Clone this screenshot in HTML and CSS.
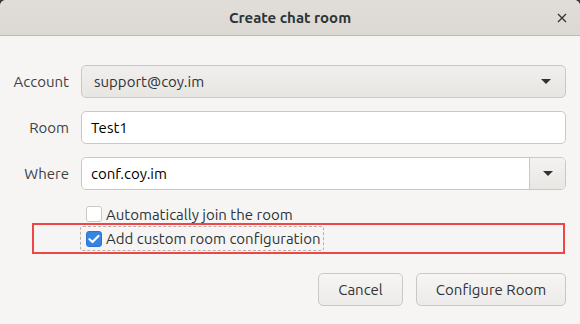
FILE: index.html
```html
<!DOCTYPE html>
<html>
<head>
	<meta charset="utf-8">
	<title>Create chat room</title>
	<link rel="stylesheet" href="styles.css">
</head>
<body>
	<div class="dialog">
		<!-- title bar -->
		<div class="titlebar">
			<span class="title">Create chat room</span>
			<svg class="close" width="10" height="10" viewBox="0 0 10 10"><path d="M1 1 L9 9 M9 1 L1 9" stroke="#2e3436" stroke-width="1.3" fill="none"/></svg>
		</div>
		<div class="content">
			<!-- form rows -->
			<div class="form">
				<label class="lbl">Account</label>
				<div class="combo">
					<span>support@coy.im</span>
					<span class="arrow"></span>
				</div>
				<label class="lbl">Room</label>
				<div class="entry">Test1</div>
				<label class="lbl">Where</label>
				<div class="entry entry-combo">
					<span class="entry-text">conf.coy.im</span>
					<span class="drop"><span class="arrow"></span></span>
				</div>
			</div>
			<!-- options -->
			<div class="checks">
				<div class="check-row">
					<span class="box"></span>
					<span>Automatically join the room</span>
				</div>
				<div class="highlight">
					<div class="check-row focused">
						<span class="box checked">
							<svg width="12" height="10" viewBox="0 0 12 10"><path d="M1.5 5.2 L4.5 8 L10.5 2" fill="none" stroke="#fff" stroke-width="2.2" stroke-linecap="round" stroke-linejoin="round"/></svg>
						</span>
						<span>Add custom room configuration</span>
					</div>
				</div>
			</div>
			<!-- buttons -->
			<div class="actions">
				<div class="btn btn-cancel">Cancel</div>
				<div class="btn btn-ok">Configure Room</div>
			</div>
		</div>
	</div>
</body>
</html>
```

FILE: styles.css
```css
/* page reset */
body {
	margin: 0;
	background-color: #3b3b3b;
	font-family: "Ubuntu", "Noto Sans", sans-serif;
	font-size: 15px;
	color: #2e3436;
}
/* the window itself */
.dialog {
	width: 580px;
	height: 324px;
	background-color: #f6f5f4;
	border-radius: 6px 6px 0 0;
	overflow: hidden;
}
/* header with title and close button */
.titlebar {
	height: 36px;
	box-sizing: border-box;
	border-bottom: 1px solid #c0bbb5;
	background: linear-gradient(#e1deda, #dcd8d4);
	display: flex;
	align-items: center;
	justify-content: center;
	position: relative;
}
.title {
	font-weight: bold;
	font-size: 15px;
	color: #2e3436;
}
.close {
	position: absolute;
	right: 13px;
	top: 13px;
}
.content {
	padding: 29px 14px 0 0;
}
/* label + field grid */
.form {
	display: grid;
	grid-template-columns: 69px 1fr;
	column-gap: 12px;
	row-gap: 13px;
	align-items: center;
}
.lbl {
	text-align: right;
	color: #3d4244;
}
.combo {
	height: 33px;
	box-sizing: border-box;
	border: 1px solid #cdc7c2;
	border-radius: 5px;
	background: linear-gradient(#f0efed, #e8e6e3);
	display: flex;
	align-items: center;
	justify-content: space-between;
	padding: 0 14px 0 12px;
	color: #2e3436;
}
.arrow {
	width: 0;
	height: 0;
	border-left: 5px solid transparent;
	border-right: 5px solid transparent;
	border-top: 5px solid #2e3436;
}
.entry {
	height: 33px;
	box-sizing: border-box;
	border: 1px solid #cdc7c2;
	border-radius: 5px;
	background-color: #fff;
	display: flex;
	align-items: center;
	padding-left: 9px;
	color: #000;
}
.entry-combo {
	padding-left: 0;
	overflow: hidden;
}
.entry-text {
	flex: 1;
	padding-left: 9px;
}
.drop {
	width: 36px;
	height: 100%;
	box-sizing: border-box;
	border-left: 1px solid #cdc7c2;
	background: linear-gradient(#f3f2f0, #e9e7e4);
	display: flex;
	align-items: center;
	justify-content: center;
}
/* checkbox options */
.checks {
	padding-top: 16px;
}
.check-row {
	display: flex;
	align-items: center;
	gap: 4px;
	height: 16px;
	margin-left: 86px;
	color: #2e3436;
}
.box {
	width: 16px;
	height: 16px;
	box-sizing: border-box;
	border: 1px solid #cdc7c2;
	border-radius: 3px;
	background-color: #fff;
	display: flex;
	align-items: center;
	justify-content: center;
}
.box.checked {
	border-color: #2a76d3;
	background-color: #3584e4;
}
/* red marker around the selected option */
.highlight {
	margin: 1px 0 0 32px;
	width: 533px;
	height: 31px;
	box-sizing: border-box;
	border: 2px solid #ee4646;
	display: flex;
	align-items: flex-start;
}
.check-row.focused {
	margin: 1px 0 0 46px;
	height: 23px;
	padding: 0 3px 0 5px;
	border: 1px dashed #b6b0aa;
	border-radius: 3px;
}
/* dialog buttons */
.actions {
	display: flex;
	justify-content: flex-end;
	gap: 13px;
	padding-top: 19px;
}
.btn {
	height: 33px;
	box-sizing: border-box;
	border: 1px solid #cdc7c2;
	border-radius: 5px;
	background: linear-gradient(#f6f5f4, #edebe9);
	display: flex;
	align-items: center;
	justify-content: center;
	color: #2e3436;
}
.btn-cancel {
	width: 85px;
}
.btn-ok {
	width: 150px;
}
```
